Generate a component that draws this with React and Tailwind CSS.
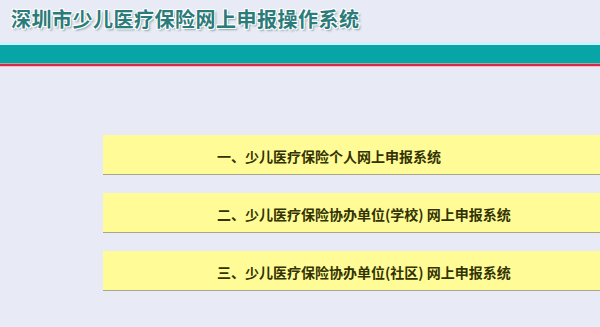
const ITEMS = [
  '一、少儿医疗保险个人网上申报系统',
  '二、少儿医疗保险协办单位(学校) 网上申报系统',
  '三、少儿医疗保险协办单位(社区) 网上申报系统',
]

export default function App() {
  return (
    <div
      className="w-[600px] h-[327px] overflow-hidden bg-[#e8eaf6]"
      style={{ fontFamily: '"Noto Sans CJK SC", "Noto Sans", sans-serif' }}
    >
      {/* Title */}
      <div className="h-[42px] pl-[11px] pt-[6px]">
        <h1
          className="text-[20px] leading-[26px] font-bold text-[#2b7b7b] tracking-[0.5px]"
          style={{ textShadow: '1px 1px 0 #fff, -1px -1px 0 #fff, 1px -1px 0 #fff, -1px 1px 0 #fff, 2px 2px 2px #8aa' }}
        >
          深圳市少儿医疗保险网上申报操作系统
        </h1>
      </div>
      {/* Header bars */}
      <div className="h-[3px] bg-[#cdf0fa]" />
      <div className="h-[18px] bg-[#07a5a5]" />
      <div className="h-[1px] bg-[#9fae9e]" />
      <div className="h-[2px] bg-[#d8284a]" />
      <div className="h-[1px] bg-[#f7b8c6]" />

      {/* Menu */}
      <div className="pt-[68px] pl-[103px] flex flex-col gap-[18px]">
        {ITEMS.map((text, i) => (
          <div
            key={i}
            className="h-[40px] w-[520px] bg-[#fffc98] border-b border-[#a9a68a] flex items-center pl-[114px] pt-[4px] cursor-pointer"
          >
            <span className="text-[14px] font-bold text-[#333300] whitespace-pre">{text}</span>
          </div>
        ))}
      </div>
    </div>
  )
}
